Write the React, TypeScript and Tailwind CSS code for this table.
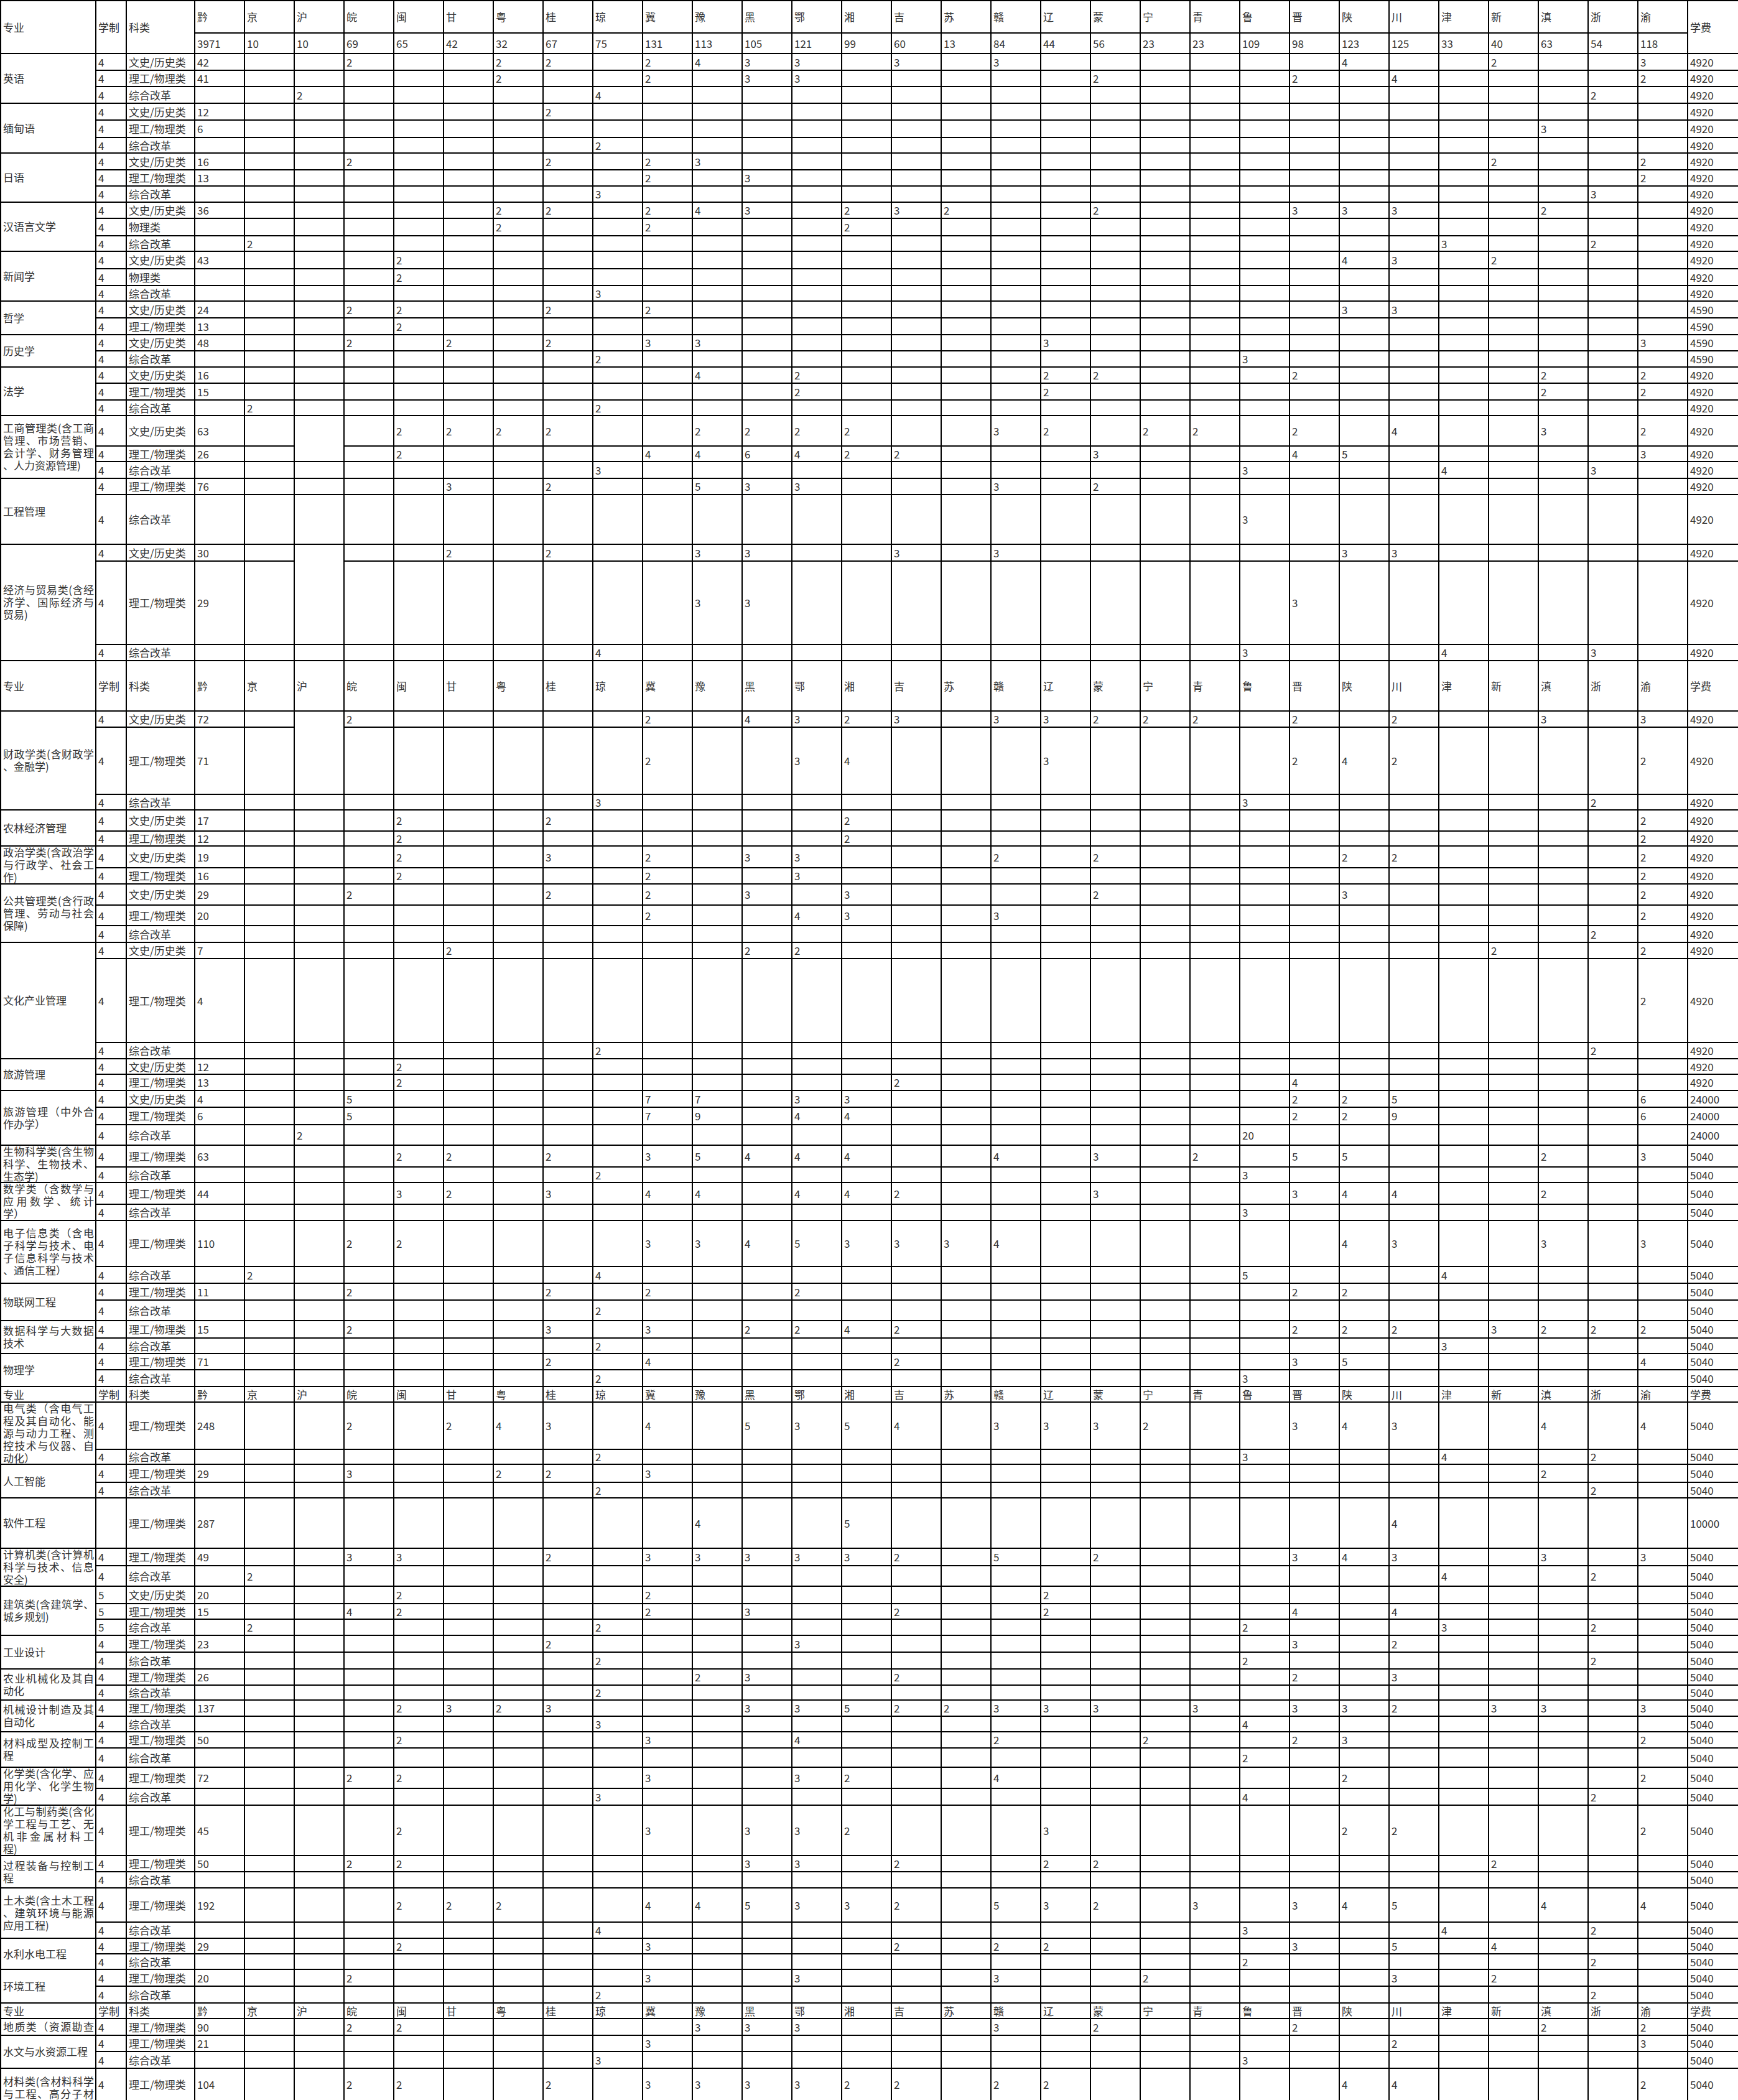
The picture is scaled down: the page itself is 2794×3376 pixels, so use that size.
import React from "react";

const PROVS = ["黔", "京", "沪", "皖", "闽", "甘", "粤", "桂", "琼", "冀", "豫", "黑", "鄂", "湘", "吉", "苏", "赣", "辽", "蒙", "宁", "青", "鲁", "晋", "陕", "川", "津", "新", "滇", "浙", "渝"];
const COUNTS = [3971, 10, 10, 69, 65, 42, 32, 67, 75, 131, 113, 105, 121, 99, 60, 13, 84, 44, 56, 23, 23, 109, 98, 123, 125, 33, 40, 63, 54, 118];

// row heights, written out so tailwind picks them up
const H: Record<number, string> = {
  24: "h-[24px]",
  25: "h-[25px]",
  26: "h-[26px]",
  27: "h-[27px]",
  28: "h-[28px]",
  29: "h-[29px]",
  31: "h-[31px]",
  33: "h-[33px]",
  34: "h-[34px]",
  35: "h-[35px]",
  49: "h-[49px]",
  52: "h-[52px]",
  55: "h-[55px]",
  74: "h-[74px]",
  76: "h-[76px]",
  80: "h-[80px]",
  81: "h-[81px]",
  108: "h-[108px]",
  134: "h-[134px]",
  135: "h-[135px]",
};

type Group = { name: string[]; rows: string[]; clip?: string };
type Block = { head: number } | Group;

// row: 学制|科类|黔|others|学费|height|沪 span (2 = spans two rows, 0 = covered)
const DATA: Block[] = [
  { head: 0 },
  { name: ["英语"], rows: [
    "4|文史/历史类|42|皖2 粤2 桂2 冀2 豫4 黑3 鄂3 吉3 赣3 陕4 新2 渝3|4920|27",
    "4|理工/物理类|41|粤2 冀2 黑3 鄂3 蒙2 晋2 川4 渝2|4920|26",
    "4|综合改革||沪2 琼4 浙2|4920|27",
  ] },
  { name: ["缅甸语"], rows: [
    "4|文史/历史类|12|桂2|4920|27",
    "4|理工/物理类|6|滇3|4920|28",
    "4|综合改革||琼2|4920|25",
  ] },
  { name: ["日语"], rows: [
    "4|文史/历史类|16|皖2 桂2 冀2 豫3 新2 渝2|4920|27",
    "4|理工/物理类|13|冀2 黑3 渝2|4920|26",
    "4|综合改革||琼3 浙3|4920|26",
  ] },
  { name: ["汉语言文学"], rows: [
    "4|文史/历史类|36|粤2 桂2 冀2 豫4 黑3 湘2 吉3 苏2 蒙2 晋3 陕3 川3 滇2|4920|26",
    "4|物理类||粤2 冀2 湘2|4920|28",
    "4|综合改革||京2 津3 浙2|4920|25",
  ] },
  { name: ["新闻学"], rows: [
    "4|文史/历史类|43|闽2 陕4 川3 新2|4920|28",
    "4|物理类||闽2|4920|27",
    "4|综合改革||琼3|4920|25",
  ] },
  { name: ["哲学"], rows: [
    "4|文史/历史类|24|皖2 闽2 桂2 冀2 陕3 川3|4590|27",
    "4|理工/物理类|13|闽2|4590|27",
  ] },
  { name: ["历史学"], rows: [
    "4|文史/历史类|48|皖2 甘2 桂2 冀3 豫3 辽3 渝3|4590|26",
    "4|综合改革||琼2 鲁3|4590|26",
  ] },
  { name: ["法学"], rows: [
    "4|文史/历史类|16|豫4 鄂2 辽2 蒙2 晋2 滇2 渝2|4920|26",
    "4|理工/物理类|15|鄂2 辽2 滇2 渝2|4920|27",
    "4|综合改革||京2 琼2|4920|25",
  ] },
  { name: ["工商管理类(含工商", "管理、市场营销、", "会计学、财务管理", "、人力资源管理)"], rows: [
    "4|文史/历史类|63|闽2 甘2 粤2 桂2 豫2 黑2 鄂2 湘2 赣3 辽2 宁2 青2 晋2 川4 滇3 渝2|4920|49|2",
    "4|理工/物理类|26|闽2 冀4 豫4 黑6 鄂4 湘2 吉2 蒙3 晋4 陕5 渝3|4920|25|0",
    "4|综合改革||琼3 鲁3 津4 浙3|4920|27",
  ] },
  { name: ["工程管理"], rows: [
    "4|理工/物理类|76|甘3 桂2 豫5 黑3 鄂3 赣3 蒙2|4920|26",
    "4|综合改革||鲁3|4920|80",
  ] },
  { name: ["经济与贸易类(含经", "济学、国际经济与", "贸易)"], rows: [
    "4|文史/历史类|30|甘2 桂2 豫3 黑3 吉3 赣3 陕3 川3|4920|27|2",
    "4|理工/物理类|29|豫3 黑3 晋3|4920|134|0",
    "4|综合改革||琼4 鲁3 津4 浙3|4920|26",
  ] },
  { head: 81 },
  { name: ["财政学类(含财政学", "、金融学)"], rows: [
    "4|文史/历史类|72|皖2 冀2 黑4 鄂3 湘2 吉3 赣3 辽3 蒙2 宁2 青2 晋2 川2 滇3 渝3|4920|26|2",
    "4|理工/物理类|71|冀2 鄂3 湘4 辽3 晋2 陕4 川2 渝2|4920|108|0",
    "4|综合改革||琼3 鲁3 浙2|4920|25",
  ] },
  { name: ["农林经济管理"], rows: [
    "4|文史/历史类|17|闽2 桂2 湘2 渝2|4920|34",
    "4|理工/物理类|12|闽2 湘2 渝2|4920|24",
  ] },
  { name: ["政治学类(含政治学", "与行政学、社会工", "作)"], rows: [
    "4|文史/历史类|19|闽2 桂3 冀2 黑3 鄂3 赣2 蒙2 陕2 川2 渝2|4920|35",
    "4|理工/物理类|16|闽2 冀2 鄂3 渝2|4920|26",
  ] },
  { name: ["公共管理类(含行政", "管理、劳动与社会", "保障)"], rows: [
    "4|文史/历史类|29|皖2 桂2 冀2 黑3 湘3 蒙2 陕3 渝2|4920|34",
    "4|理工/物理类|20|冀2 鄂4 湘3 赣3 渝2|4920|33",
    "4|综合改革||浙2|4920|27",
  ] },
  { name: ["文化产业管理"], rows: [
    "4|文史/历史类|7|甘2 黑2 鄂2 新2 渝2|4920|26",
    "4|理工/物理类|4|渝2|4920|135",
    "4|综合改革||琼2 浙2|4920|26",
  ] },
  { name: ["旅游管理"], rows: [
    "4|文史/历史类|12|闽2|4920|25",
    "4|理工/物理类|13|闽2 吉2 晋4|4920|26",
  ] },
  { name: ["旅游管理（中外合", "作办学）"], rows: [
    "4|文史/历史类|4|皖5 冀7 豫7 鄂3 湘3 晋2 陕2 川5 渝6|24000|27",
    "4|理工/物理类|6|皖5 冀7 豫9 鄂4 湘4 晋2 陕2 川9 渝6|24000|28",
    "4|综合改革||沪2 鲁20|24000|33",
  ] },
  { name: ["生物科学类(含生物", "科学、生物技术、", "生态学)"], rows: [
    "4|理工/物理类|63|闽2 甘2 桂2 冀3 豫5 黑4 鄂4 湘4 赣4 蒙3 青2 晋5 陕5 滇2 渝3|5040|35",
    "4|综合改革||琼2 鲁3|5040|25",
  ] },
  { name: ["数学类（含数学与", "应用数学、统计", "学）"], rows: [
    "4|理工/物理类|44|闽3 甘2 桂3 冀4 豫4 鄂4 湘4 吉2 蒙3 晋3 陕4 川4 滇2|5040|35",
    "4|综合改革||鲁3|5040|26",
  ] },
  { name: ["电子信息类（含电", "子科学与技术、电", "子信息科学与技术", "、通信工程）"], rows: [
    "4|理工/物理类|110|皖2 闽2 冀3 豫3 黑4 鄂5 湘3 吉3 苏3 赣4 陕4 川3 滇3 渝3|5040|74",
    "4|综合改革||京2 琼4 鲁5 津4|5040|27",
  ] },
  { name: ["物联网工程"], rows: [
    "4|理工/物理类|11|皖2 桂2 冀2 鄂2 晋2 陕2|5040|27",
    "4|综合改革||琼2|5040|33",
  ] },
  { name: ["数据科学与大数据", "技术"], rows: [
    "4|理工/物理类|15|皖2 桂3 冀3 黑2 鄂2 湘4 吉2 晋2 陕2 川2 新3 滇2 浙2 渝2|5040|28",
    "4|综合改革||琼2 津3|5040|25",
  ] },
  { name: ["物理学"], rows: [
    "4|理工/物理类|71|桂2 冀4 吉2 晋3 陕5 渝4|5040|26",
    "4|综合改革||琼2 鲁3|5040|27",
  ] },
  { head: 25 },
  { name: ["电气类（含电气工", "程及其自动化、能", "源与动力工程、测", "控技术与仪器、自", "动化）"], rows: [
    "4|理工/物理类|248|皖2 甘2 粤4 桂3 冀4 黑5 鄂3 湘5 吉4 赣3 辽3 蒙3 宁2 晋3 陕4 川3 滇4 渝4|5040|76",
    "4|综合改革||琼2 鲁3 津4 浙2|5040|24",
  ] },
  { name: ["人工智能"], rows: [
    "4|理工/物理类|29|皖3 粤2 桂2 冀3 滇2|5040|29",
    "4|综合改革||琼2 浙2|5040|25",
  ] },
  { name: ["软件工程"], rows: [
    "|理工/物理类|287|豫4 湘5 川4|10000|81",
  ] },
  { name: ["计算机类(含计算机", "科学与技术、信息", "安全)"], rows: [
    "4|理工/物理类|49|皖3 闽3 桂2 冀3 豫3 黑3 鄂3 湘3 吉2 赣5 蒙2 晋3 陕4 川3 滇3 渝3|5040|28",
    "4|综合改革||京2 津4 浙2|5040|33",
  ] },
  { name: ["建筑类(含建筑学、", "城乡规划)"], rows: [
    "5|文史/历史类|20|闽2 冀2 辽2|5040|28",
    "5|理工/物理类|15|皖4 闽2 冀2 黑3 吉2 辽2 晋4 川4|5040|25",
    "5|综合改革||京2 琼2 鲁2 津3 浙2|5040|26",
  ] },
  { name: ["工业设计"], rows: [
    "4|理工/物理类|23|桂2 鄂3 晋3 川2|5040|27",
    "4|综合改革||琼2 鲁2 浙2|5040|27",
  ] },
  { name: ["农业机械化及其自", "动化"], rows: [
    "4|理工/物理类|26|豫2 黑3 吉2 晋2 川3|5040|26",
    "4|综合改革||琼2|5040|24",
  ] },
  { name: ["机械设计制造及其", "自动化"], rows: [
    "4|理工/物理类|137|闽2 甘3 粤2 桂3 黑3 鄂3 湘5 吉2 苏2 赣3 辽3 蒙3 青3 晋3 陕3 川2 新3 滇3 渝3|5040|26",
    "4|综合改革||琼3 鲁4|5040|25",
  ] },
  { name: ["材料成型及控制工", "程"], rows: [
    "4|理工/物理类|50|闽2 冀3 鄂4 赣2 宁2 晋2 陕3 渝2|5040|26",
    "4|综合改革||鲁2|5040|31",
  ] },
  { name: ["化学类(含化学、应", "用化学、化学生物", "学)"], rows: [
    "4|理工/物理类|72|皖2 闽2 冀3 鄂3 湘2 赣4 陕2 渝2|5040|34",
    "4|综合改革||琼3 鲁4 浙2|5040|27",
  ] },
  { name: ["化工与制药类(含化", "学工程与工艺、无", "机非金属材料工", "程)"], rows: [
    "4|理工/物理类|45|闽2 冀3 黑3 鄂3 湘2 辽3 陕2 川2 渝2|5040|81",
  ] },
  { name: ["过程装备与控制工", "程"], rows: [
    "4|理工/物理类|50|皖2 闽2 黑3 鄂3 吉2 辽2 蒙2 新2|5040|26",
    "4|综合改革|||5040|26",
  ] },
  { name: ["土木类(含土木工程", "、建筑环境与能源", "应用工程)"], rows: [
    "4|理工/物理类|192|闽2 甘2 粤2 冀4 豫4 黑5 鄂3 湘3 吉2 赣5 辽3 蒙2 青3 晋3 陕4 川5 滇4 渝4|5040|55",
    "4|综合改革||琼4 鲁3 津4 浙2|5040|26",
  ] },
  { name: ["水利水电工程"], rows: [
    "4|理工/物理类|29|闽2 冀3 吉2 赣2 辽2 晋3 川5 新4|5040|25",
    "4|综合改革||鲁2 浙2|5040|25",
  ] },
  { name: ["环境工程"], rows: [
    "4|理工/物理类|20|皖2 冀3 鄂3 赣3 宁2 川3 新2|5040|27",
    "4|综合改革||琼2 浙2|5040|27",
  ] },
  { head: 25 },
  { name: ["地质类（资源勘查", "工程、地质工程）"], clip: "pt-[2px]", rows: [
    "4|理工/物理类|90|皖2 闽2 豫3 黑3 鄂3 赣3 蒙2 晋2 滇2 渝2|5040|27",
  ] },
  { name: ["水文与水资源工程"], rows: [
    "4|理工/物理类|21|冀3 川2 渝3|5040|26",
    "4|综合改革||琼3 鲁3|5040|27",
  ] },
  { name: ["材料类(含材料科学", "与工程、高分子材", "料与工程)"], clip: "pt-[10px]", rows: [
    "4|理工/物理类|104|皖2 闽2 桂2 冀3 豫3 黑3 鄂3 湘2 吉2 赣2 辽2 陕4 川4 渝2|5040|52",
  ] },
];

const cell = "border-2 border-black pl-[3px] pr-[2px] py-0 align-middle text-left whitespace-nowrap overflow-hidden";

function parseRow(s: string) {
  const [xz, kl, qian, vals, fee, h, hu] = s.split("|");
  const v: Record<string, string> = {};
  (vals || "").split(" ").filter(Boolean).forEach((t) => {
    v[t[0]] = t.slice(1);
  });
  return { xz, kl, qian, v, fee, h: Number(h), hu };
}

function HeadRows({ h }: { h: number }) {
  if (h === 0) {
    return (
      <>
        <tr className={H[52]}>
          <td rowSpan={2} className={cell}>专业</td>
          <td rowSpan={2} className={cell}>学制</td>
          <td rowSpan={2} className={cell}>科类</td>
          {PROVS.map((p) => (
            <td key={p} className={cell}>{p}</td>
          ))}
          <td rowSpan={2} className={cell}>学费</td>
        </tr>
        <tr className={H[33]}>
          {COUNTS.map((c, i) => (
            <td key={i} className={cell}>{c}</td>
          ))}
        </tr>
      </>
    );
  }
  return (
    <tr className={H[h]}>
      <td className={cell}>专业</td>
      <td className={cell}>学制</td>
      <td className={cell}>科类</td>
      {PROVS.map((p) => (
        <td key={p} className={cell}>{p}</td>
      ))}
      <td className={cell}>学费</td>
    </tr>
  );
}

function NameLines({ lines }: { lines: string[] }) {
  return (
    <>
      {lines.map((ln, i) => (
        <div
          key={i}
          className={i < lines.length - 1 ? "whitespace-nowrap [text-align-last:justify] text-justify" : "whitespace-nowrap"}
        >
          {ln}
        </div>
      ))}
    </>
  );
}

function GroupRows({ g }: { g: Group }) {
  const rows = g.rows.map(parseRow);
  const total = rows.reduce((a, r) => a + r.h, 0);
  return (
    <>
      {rows.map((r, i) => (
        <tr key={i} className={H[r.h]}>
          {i === 0 && (
            <td
              rowSpan={rows.length}
              className="border-2 border-black pl-[3px] pr-[2px] py-0 align-top text-left"
            >
              {g.clip ? (
                <div className={`overflow-hidden ${g.clip}`} style={{ height: total - 3 }}>
                  <NameLines lines={g.name} />
                </div>
              ) : (
                // fixed box so long names never push the rows taller
                <div className="flex flex-col justify-center overflow-visible" style={{ height: total - 3 }}>
                  <NameLines lines={g.name} />
                </div>
              )}
            </td>
          )}
          <td className={cell}>{r.xz}</td>
          <td className={cell}>{r.kl}</td>
          <td className={cell}>{r.qian}</td>
          {PROVS.slice(1).map((p) => {
            if (p === "沪" && r.hu === "0") return null;
            return (
              <td key={p} rowSpan={p === "沪" && r.hu === "2" ? 2 : undefined} className={cell}>
                {r.v[p] ?? ""}
              </td>
            );
          })}
          <td className={cell}>{r.fee}</td>
        </tr>
      ))}
    </>
  );
}

export default function App() {
  return (
    <div className="w-[2794px] h-[3376px] overflow-hidden bg-white text-[#333] text-[17px] leading-[20px] font-['Noto_Sans_CJK_SC','Noto_Sans',sans-serif]">
      <table className="table-fixed border-collapse w-[2794px]">
        <colgroup>
          <col className="w-[153px]" />
          <col className="w-[49px]" />
          <col className="w-[110px]" />
          {PROVS.map((p) => (
            <col key={p} className="w-[80px]" />
          ))}
          <col className="w-[82px]" />
        </colgroup>
        <tbody>
          {DATA.map((b, i) =>
            "head" in b ? <HeadRows key={i} h={b.head} /> : <GroupRows key={i} g={b} />
          )}
        </tbody>
      </table>
    </div>
  );
}
